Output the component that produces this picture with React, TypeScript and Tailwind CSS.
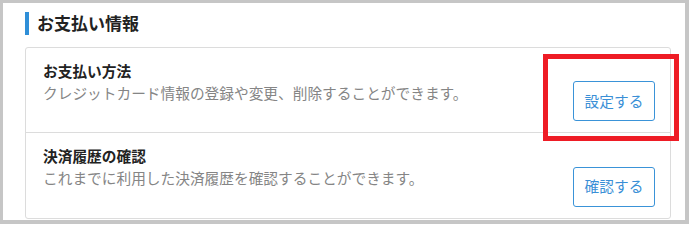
export default function App() {
  const rows = [
    {
      title: "お支払い方法",
      desc: "クレジットカード情報の登録や変更、削除することができます。",
      action: "設定する",
    },
    {
      title: "決済履歴の確認",
      desc: "これまでに利用した決済履歴を確認することができます。",
      action: "確認する",
    },
  ];

  return (
    <div
      className="relative w-[689px] h-[224px] bg-[#c6c6c6] pt-[3px] pl-[3px] pr-[4px] pb-[4px]"
      style={{ fontFamily: '"Noto Sans CJK JP", "Noto Sans", sans-serif' }}
    >
      <div className="h-full bg-white pl-[22px] pr-[14px] pt-[9px]">
        <div className="flex items-center h-[23px]">
          <span className="shrink-0 w-[4px] h-[23px] bg-[#2f8fd8]" />
          <h2 className="ml-[8px] -mt-[3px] text-[17px] font-bold text-[#222] leading-none">
            お支払い情報
          </h2>
        </div>
        <div className="mt-[12px] border border-[#dcdcdc] rounded-[3px]">
          {rows.map((r, i) => (
            <div
              key={r.title}
              className={`flex items-center justify-between h-[85px] pl-[17px] pr-[15px] ${
                i === 0 ? "border-b border-[#dcdcdc]" : ""
              }`}
            >
              <div className="self-start pt-[12px]">
                <p className="text-[14.7px] font-bold text-[#222] leading-[22px]">
                  {r.title}
                </p>
                <p className="text-[14.7px] text-[#858585] leading-[22px]">
                  {r.desc}
                </p>
              </div>
              <button className="shrink-0 mt-[22px] w-[82px] h-[40px] border border-[#3a93d8] rounded-[3px] text-[14.7px] text-[#3a8fd6] bg-white">
                {r.action}
              </button>
            </div>
          ))}
        </div>
      </div>
      <div className="absolute left-[543px] top-[54px] w-[136px] h-[87px] border-[5px] border-[#ee1c25]" />
    </div>
  );
}
